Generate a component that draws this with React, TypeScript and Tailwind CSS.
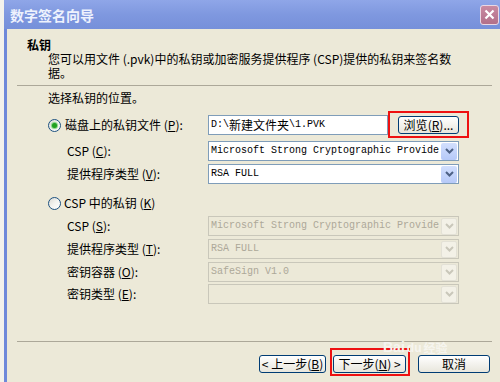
import React from "react";

const CJK = "font-['SimSun','Noto_Sans_CJK_SC',sans-serif]";
const MONO = "font-['Liberation_Mono','Noto_Sans_CJK_SC',monospace]";

const Mn = ({ k }: { k: string }) => (
  <span>
    (<span className="underline underline-offset-1">{k}</span>)
  </span>
);

const Radio = ({ checked }: { checked?: boolean }) => (
  <span className="flex h-[13px] w-[13px] shrink-0 items-center justify-center rounded-full border border-[#1c5180] bg-gradient-to-br from-[#dcdbd5] via-[#f4f4f0] to-white">
    {checked && (
      <span className="h-[5px] w-[5px] rounded-full bg-[#21a121] shadow-[0_0_1px_1px_#7fd07f]" />
    )}
  </span>
);

const Chevron = ({ color }: { color: string }) => (
  <svg width="9" height="6" viewBox="0 0 9 6">
    <polyline points="1,1 4.5,4.5 8,1" fill="none" stroke={color} strokeWidth="2" />
  </svg>
);

const Combo = ({ value, disabled }: { value: string; disabled?: boolean }) => (
  <div
    className={`flex h-[20px] w-[251px] items-center border ${
      disabled ? "border-[#c9c7ba] bg-[#ece9d8] text-[#aca899]" : "border-[#7f9db9] bg-white text-black"
    }`}
  >
    <span className={`flex-1 whitespace-nowrap pl-[2px] text-[10px] leading-[18px] ${MONO}`}>{value}</span>
    <span
      className={`mr-px flex h-[17px] w-[16px] items-center justify-center rounded-[2px] ${
        disabled ? "border border-[#e3e1d6] bg-[#f3f1e7]" : "bg-gradient-to-b from-[#d2dffd] to-[#b6c9f8]"
      }`}
    >
      <Chevron color={disabled ? "#c9c7ba" : "#4d6185"} />
    </span>
  </div>
);

const XPButton = ({ children, w }: { children: React.ReactNode; w: string }) => (
  <div
    className={`flex h-[18px] ${w} items-center justify-center whitespace-nowrap rounded-[3px] border border-[#003c74] bg-gradient-to-b from-white to-[#e8e6dc] text-[12px] leading-none text-black ${CJK}`}
  >
    {children}
  </div>
);

const Label = ({ children }: { children: React.ReactNode }) => (
  <div className={`w-[160px] pl-[19px] text-[12px] leading-[14px] text-black ${CJK}`}>{children}</div>
);

export default function App() {
  return (
    <div className="relative h-[382px] w-[500px] overflow-hidden bg-[#f3f2ec] pl-[4px]">
      <div className="flex h-full flex-col">
        {/* Title bar */}
        <div className="flex h-[29px] items-center justify-between bg-gradient-to-b from-[#8fa6e8] via-[#7f98df] to-[#7690da] pl-[6px] pr-px">
          <span className={`text-[14px] font-bold leading-none text-[#eef2fd] ${CJK}`}>数字签名向导</span>
          <span className="flex h-[20px] w-[19px] items-center justify-center rounded-[3px] border border-[#e9d8e4] bg-gradient-to-b from-[#c98aa1] to-[#b2708a]">
            <svg width="11" height="11" viewBox="0 0 11 11">
              <path d="M1.5 1.5 L9.5 9.5 M9.5 1.5 L1.5 9.5" stroke="white" strokeWidth="2.2" />
            </svg>
          </span>
        </div>

        {/* Body */}
        <div className={`flex flex-1 flex-col border-l-[3px] border-[#6f89da] bg-[#ece9d8] pb-[9px] text-black ${CJK}`}>
          <div className="pl-[20px] pt-[9px]">
            <div className="text-[12px] font-bold leading-[14px]">私钥</div>
            <div className="whitespace-nowrap pl-[21px] text-[12px] leading-[14px]">
              您可以用文件 (.pvk)中的私钥或加密服务提供程序 (CSP)提供的私钥来签名数
              <br />
              据。
            </div>
          </div>
          <div className="ml-[10px] mt-[5px] h-px w-[475px] bg-[#aca899]" />

          <div className="pl-[41px]">
            <div className="mt-[5px] text-[12px] leading-[14px]">选择私钥的位置。</div>

            <div className="mt-[10px] flex h-[20px] items-center">
              <div className="flex w-[160px] items-center gap-[4px] text-[12px] leading-[14px]">
                <Radio checked />
                <span>
                  磁盘上的私钥文件 <Mn k="P" />:
                </span>
              </div>
              <div className={`flex h-[20px] w-[180px] items-center border border-[#7f9db9] bg-white pl-[2px] text-[10px] leading-[18px] ${MONO}`}>
                D:\<span className={`text-[12px] ${CJK}`}>新建文件夹</span>\1.PVK
              </div>
              <div className="relative ml-[10px]">
                <XPButton w="w-[61px]">
                  浏览 <Mn k="R" />...
                </XPButton>
                <div className="absolute -bottom-[4px] -left-[10px] -right-[10px] -top-[5px] border-2 border-[#ee1111]" />
              </div>
            </div>

            <div className="mt-[6px] flex items-center">
              <Label>
                CSP <Mn k="C" />:
              </Label>
              <Combo value="Microsoft Strong Cryptographic Provide" />
            </div>
            <div className="mt-[3px] flex items-center">
              <Label>
                提供程序类型 <Mn k="V" />:
              </Label>
              <Combo value="RSA FULL" />
            </div>

            <div className="mt-[12px] flex items-center gap-[3px] text-[12px] leading-[14px]">
              <Radio />
              <span>
                CSP 中的私钥 <Mn k="K" />
              </span>
            </div>

            <div className="mt-[6px] flex items-center">
              <Label>
                CSP <Mn k="S" />:
              </Label>
              <Combo value="Microsoft Strong Cryptographic Provide" disabled />
            </div>
            <div className="mt-[3px] flex items-center">
              <Label>
                提供程序类型 <Mn k="T" />:
              </Label>
              <Combo value="RSA FULL" disabled />
            </div>
            <div className="mt-[3px] flex items-center">
              <Label>
                密钥容器 <Mn k="O" />:
              </Label>
              <Combo value="SafeSign V1.0" disabled />
            </div>
            <div className="mt-[2px] flex items-center">
              <Label>
                密钥类型 <Mn k="E" />:
              </Label>
              <Combo value="" disabled />
            </div>
          </div>

          <div className="flex-1" />
          <div className="ml-[10px] h-px w-[475px] bg-[#aca899]" />

          <div className="mt-[13px] flex items-center justify-end pr-[10px]">
            <XPButton w="w-[67px]">
              &lt; 上一步 <Mn k="B" />
            </XPButton>
            <div className="relative ml-[7px]">
              <XPButton w="w-[73px]">
                下一步 <Mn k="N" /> &nbsp;&gt;
              </XPButton>
              <div className="absolute -bottom-[3px] -left-[3px] -right-[4px] -top-[7px] border-2 border-[#ee1111]" />
            </div>
            <div className="ml-[12px]">
              <XPButton w="w-[72px]">取消</XPButton>
            </div>
          </div>
        </div>
      </div>

      {/* watermark */}
      <div className="pointer-events-none absolute left-[383px] top-[340px] flex items-end gap-[2px] font-['Liberation_Sans',sans-serif] text-[14px] font-bold leading-none text-[#f6f5ef]">
        <span>Bai</span>
        <span className="text-[12px]">du</span>
        <span className={`text-[12px] ${CJK}`}>经验</span>
      </div>
    </div>
  );
}
